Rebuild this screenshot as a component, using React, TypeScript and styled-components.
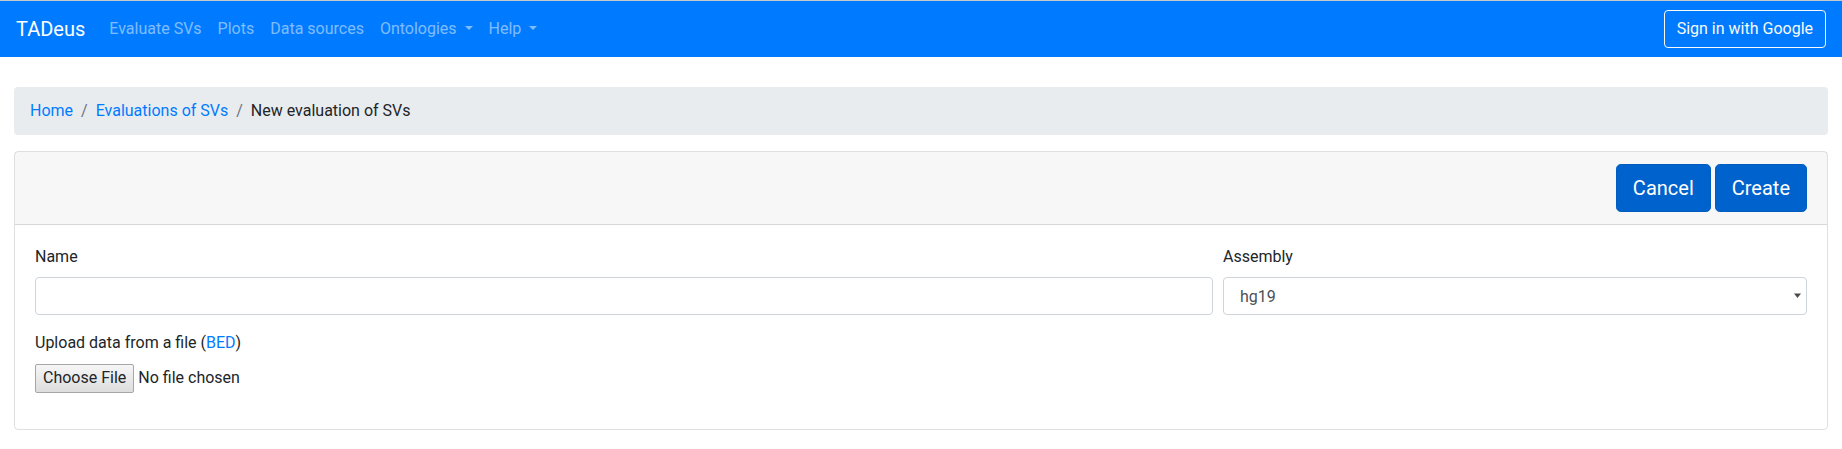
import React from 'react';
import styled, { createGlobalStyle } from 'styled-components';

const GlobalStyle = createGlobalStyle`
	* {
		box-sizing: border-box;
	}
	body {
		margin: 0;
		font-family: Roboto, "Liberation Sans", Arial, sans-serif;
		font-size: 16px;
		line-height: 1.5;
		color: #212529;
		background: #fff;
	}
`;

const Navbar = styled.nav`
	display: flex;
	align-items: center;
	justify-content: space-between;
	padding: 8px 16px;
	background-color: #007bff;
	border-top: 1px solid #c9c9c9;
`;

const NavLeft = styled.div`
	display: flex;
	align-items: center;
`;

const Brand = styled.a`
	margin-right: 16px;
	padding: 5px 0;
	font-size: 20px;
	line-height: 30px;
	color: #fff;
	text-decoration: none;
`;

const NavList = styled.div`
	display: flex;
`;

const NavLink = styled.a`
	padding: 8px;
	line-height: 24px;
	color: rgba(255, 255, 255, 0.5);
	text-decoration: none;
	white-space: nowrap;
`;

const Caret = styled.span`
	display: inline-block;
	margin-left: 0.5em;
	vertical-align: 0.255em;
	border-top: 0.3em solid;
	border-right: 0.3em solid transparent;
	border-left: 0.3em solid transparent;
`;

const OutlineBtn = styled.button`
	padding: 6px 12px;
	font-family: inherit;
	font-size: 16px;
	line-height: 24px;
	color: #f8f9fa;
	background: transparent;
	border: 1px solid #f8f9fa;
	border-radius: 4px;
`;

const Main = styled.main`
	padding: 30px 14px 0;
`;

const Breadcrumb = styled.ol`
	display: flex;
	margin: 0 0 16px;
	padding: 12px 16px;
	list-style: none;
	background-color: #e9ecef;
	border-radius: 4px;
`;

const Crumb = styled.li<{ $first?: boolean }>`
	padding-left: ${p => (p.$first ? '0' : '8px')};
	&::before {
		content: ${p => (p.$first ? 'none' : '"/"')};
		padding-right: 8px;
		color: #6c757d;
	}
`;

const Link = styled.a`
	color: #007bff;
	text-decoration: none;
`;

const Card = styled.div`
	border: 1px solid rgba(0, 0, 0, 0.125);
	border-radius: 4px;
`;

const CardHeader = styled.div`
	display: flex;
	justify-content: flex-end;
	gap: 4px;
	padding: 12px 20px;
	background-color: rgba(0, 0, 0, 0.03);
	border-bottom: 1px solid rgba(0, 0, 0, 0.125);
`;

const LargeBtn = styled.button`
	padding: 8px 16px;
	font-family: inherit;
	font-size: 20px;
	line-height: 30px;
	color: #fff;
	background-color: #0062cc;
	border: 1px solid #005cbf;
	border-radius: 4.8px;
`;

const CardBody = styled.div`
	padding: 20px;
`;

const FormRow = styled.div`
	display: flex;
	margin: 0 -5px;
`;

const Col = styled.div<{ $size: number }>`
	flex: 0 0 ${p => (p.$size / 12) * 100}%;
	max-width: ${p => (p.$size / 12) * 100}%;
	padding: 0 5px;
`;

const FormGroup = styled.div`
	margin-bottom: 16px;
`;

const Label = styled.label`
	display: inline-block;
	margin-bottom: 8px;
`;

const TextInput = styled.input`
	display: block;
	width: 100%;
	height: 38px;
	padding: 6px 12px;
	font-family: inherit;
	font-size: 16px;
	color: #495057;
	background: #fff;
	border: 1px solid #ced4da;
	border-radius: 4px;
	outline: none;
`;

const SelectWrap = styled.div`
	position: relative;
`;

const Select = styled.select`
	display: block;
	width: 100%;
	height: 38px;
	padding: 6px 24px 6px 16px;
	font-family: inherit;
	font-size: 16px;
	color: #495057;
	background: #fff;
	border: 1px solid #ced4da;
	border-radius: 4px;
	appearance: none;
	outline: none;
`;

const SelectArrow = styled.svg`
	position: absolute;
	top: 15px;
	right: 5px;
	pointer-events: none;
`;

const FileRow = styled.label`
	display: flex;
	align-items: center;
	height: 30px;
	font-size: 16px;
`;

const FileBtn = styled.span`
	display: inline-flex;
	align-items: center;
	height: 29px;
	margin-right: 4px;
	padding: 0 7px;
	line-height: 18px;
	background: linear-gradient(#f6f6f6, #dddddd);
	border: 1px solid #a6a6a6;
	border-radius: 2px;
`;

const HiddenFile = styled.input`
	display: none;
`;

export default function App() {
	return (
		<>
			<GlobalStyle />
			<Navbar>
				<NavLeft>
					<Brand href="#">TADeus</Brand>
					<NavList>
						<NavLink href="#">Evaluate SVs</NavLink>
						<NavLink href="#">Plots</NavLink>
						<NavLink href="#">Data sources</NavLink>
						<NavLink href="#">
							Ontologies<Caret />
						</NavLink>
						<NavLink href="#">
							Help<Caret />
						</NavLink>
					</NavList>
				</NavLeft>
				<OutlineBtn>Sign in with Google</OutlineBtn>
			</Navbar>
			<Main>
				<Breadcrumb>
					<Crumb $first>
						<Link href="#">Home</Link>
					</Crumb>
					<Crumb>
						<Link href="#">Evaluations of SVs</Link>
					</Crumb>
					<Crumb>New evaluation of SVs</Crumb>
				</Breadcrumb>
				<Card>
					<CardHeader>
						<LargeBtn>Cancel</LargeBtn>
						<LargeBtn>Create</LargeBtn>
					</CardHeader>
					<CardBody>
						<FormRow>
							<Col $size={8}>
								<FormGroup>
									<Label>Name</Label>
									<TextInput type="text" />
								</FormGroup>
							</Col>
							<Col $size={4}>
								<FormGroup>
									<Label>Assembly</Label>
									<SelectWrap>
										<Select defaultValue="hg19">
											<option value="hg19">hg19</option>
											<option value="hg38">hg38</option>
										</Select>
										<SelectArrow width="9" height="7" viewBox="0 0 9 7">
											<path d="M1 1.5h7L4.5 6z" fill="#4a4a4a" />
										</SelectArrow>
									</SelectWrap>
								</FormGroup>
							</Col>
						</FormRow>
						<FormGroup>
							<Label>
								Upload data from a file (<Link href="#">BED</Link>)
							</Label>
							<FileRow>
								<FileBtn>Choose File</FileBtn>
								No file chosen
								<HiddenFile type="file" />
							</FileRow>
						</FormGroup>
					</CardBody>
				</Card>
			</Main>
		</>
	);
}
